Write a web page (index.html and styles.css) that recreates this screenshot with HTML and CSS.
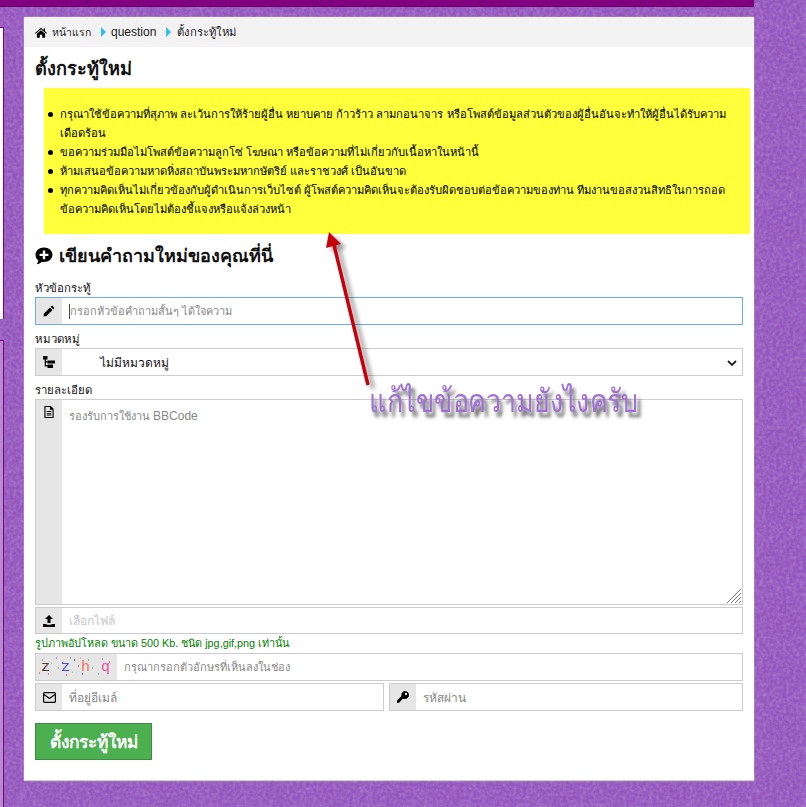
FILE: index.html
```html
<!DOCTYPE html>
<html lang="th">
<head>
<meta charset="utf-8">
<title>ตั้งกระทู้ใหม่</title>
<link rel="stylesheet" href="styles.css">
</head>
<body>
<svg class="bg-pattern" aria-hidden="true">
  <defs>
    <pattern id="damask" width="56" height="56" patternUnits="userSpaceOnUse">
      <g fill="none" stroke="#a873cc" stroke-width="2" opacity=".28">
        <path d="M28 4c7 7 11 14 0 24C17 18 21 11 28 4z"/>
        <path d="M28 28c7 7 11 14 0 24-11-10-7-17 0-24z"/>
        <path d="M4 28c7-7 14-11 24 0-10 11-17 7-24 0zM28 28c7-7 14-11 24 0-10 11-17 7-24 0z"/>
      </g>
      <g fill="none" stroke="#8a4db4" stroke-width="1.500" opacity=".28">
        <path d="M0 14c6 0 8 6 14 0s-4-12-14-14M56 42c-6 0-8-6-14 0s4 12 14 14"/>
        <circle cx="28" cy="28" r="4"/>
        <circle cx="0" cy="0" r="7"/><circle cx="56" cy="0" r="7"/><circle cx="0" cy="56" r="7"/><circle cx="56" cy="56" r="7"/>
      </g>
    </pattern>
    <filter id="grain" x="0" y="0" width="100%" height="100%">
      <feTurbulence type="fractalNoise" baseFrequency=".3" numOctaves="2" seed="4"/>
      <feColorMatrix type="matrix" values="0 0 0 0 .68  0 0 0 0 .46  0 0 0 0 .82  0 0 0 .6 -.2"/>
    </filter>
  </defs>
  <rect width="100%" height="100%" fill="url(#damask)"/>
  <rect width="100%" height="100%" filter="url(#grain)"/>
</svg>
<div class="topbar"><i class="m1"></i><i class="m2"></i><i class="m3"></i><i class="m4"></i><i class="m5"></i></div>
<div class="side side-a"></div>
<div class="side side-b"></div>
<main class="card">
  <nav class="crumbs">
    <svg class="ic-home" viewBox="0 0 14 12"><path d="M7 .5 0 6.600l.8.900L7 2.200l6.200 5.300.8-.9-2.300-2V1.200H10v2.100zM2.200 7.400V12h3.400V8.500h2.800V12h3.400V7.400L7 3.300z"/></svg>
    <span class="cr-home">หน้าแรก</span>
    <i class="tri"></i>
    <span class="latin">question</span>
    <i class="tri tri-last"></i>
    <span>ตั้งกระทู้ใหม่</span>
  </nav>
  <div class="body">
    <h1 class="title">ตั้งกระทู้ใหม่</h1>
    <div class="notice">
      <ul>
        <li>กรุณาใช้ข้อความที่สุภาพ ละเว้นการให้ร้ายผู้อื่น หยาบคาย ก้าวร้าว ลามกอนาจาร หรือโพสต์ข้อมูลส่วนตัวของผู้อื่นอันจะทำให้ผู้อื่นได้รับความ<br>เดือดร้อน</li>
        <li>ขอความร่วมมือไม่โพสต์ข้อความลูกโซ่ โฆษณา หรือข้อความที่ไม่เกี่ยวกับเนื้อหาในหน้านี้</li>
        <li>ห้ามเสนอข้อความหาดหิ่งสถาบันพระมหากษัตริย์ และราชวงศ์ เป็นอันขาด</li>
        <li>ทุกความคิดเห็นไม่เกี่ยวข้องกับผู้ดำเนินการเว็บไซต์ ผู้โพสต์ความคิดเห็นจะต้องรับผิดชอบต่อข้อความของท่าน ทีมงานขอสงวนสิทธิในการถอด<br>ข้อความคิดเห็นโดยไม่ต้องชี้แจงหรือแจ้งล่วงหน้า</li>
      </ul>
    </div>
    <h2 class="sub">
      <svg class="ic-plus" viewBox="0 0 18 18"><path fill-rule="evenodd" d="M9 .5c4.800 0 8.500 3.200 8.500 7.300S13.800 15 9 15c-.8 0-1.500-.1-2.200-.2C5.400 16.200 3.600 17 1.500 17.300c1-1 1.700-2.300 1.800-3.800C1.500 12.200.5 10.200.5 7.800.5 3.700 4.200.5 9 .5zM7.800 3.500v3.200H4.600v2.400h3.200v3.200h2.400V9.100h3.200V6.700h-3.200V3.500z"/></svg>
      เขียนคำถามใหม่ของคุณที่นี่
    </h2>
    <label class="lbl">หัวข้อกระทู้</label>
    <div class="group focus">
      <span class="addon"><svg class="ic" viewBox="0 0 12 12"><path d="M9 .5 11.500 3 10.200 4.300 7.700 1.800zM7 2.500 9.500 5 3.500 11 .5 11.500 1 8.500z"/></svg></span>
      <span class="field ph caret narrow">กรอกหัวข้อคำถามสั้นๆ ได้ใจความ</span>
    </div>
    <label class="lbl">หมวดหมู่</label>
    <div class="group">
      <span class="addon"><svg class="ic" viewBox="0 0 12 12"><path d="M0 0h4.500v3.500H3v1.700h1.500V4.500H12v3H4.500V6.500H3v2.700h1.500V8.500H10V12H4.500v-1.500H1.700v-7H0z"/></svg></span>
      <span class="field sel">ไม่มีหมวดหมู่</span>
      <svg class="chev" viewBox="0 0 10 6"><path d="M1 1l4 4 4-4" fill="none" stroke="#222" stroke-width="1.800"/></svg>
    </div>
    <label class="lbl">รายละเอียด</label>
    <div class="group area">
      <span class="addon addon-top"><svg class="ic" viewBox="0 0 12 13"><path fill-rule="evenodd" d="M1 0h7l3 3v10H1zM2.200 1.200v10.600h7.600V4H7V1.200zM3.500 5.500h5v1h-5zM3.500 7.500h5v1h-5zM3.500 9.300h5v1h-5z"/></svg></span>
      <span class="field ph top narrow">รองรับการใช้งาน <span class="latin">BBCode</span></span>
      <svg class="grip" viewBox="0 0 14 14"><path d="M14 0 0 14M14 4 4 14M14 8 8 14M14 12 12 14" stroke="#777" stroke-width="1" fill="none"/></svg>
    </div>
    <div class="group file">
      <span class="addon"><svg class="ic" viewBox="0 0 12 12"><path d="M6 0 10 4H7.500v4h-3V4H2zM0 9h3.500v.8h5V9H12v3H0z"/></svg></span>
      <span class="field ph-light">เลือกไฟล์</span>
    </div>
    <p class="hint">รูปภาพอัปโหลด ขนาด 500 Kb. ชนิด jpg,gif,png เท่านั้น</p>
    <div class="group">
      <span class="addon captcha">
        <svg class="specks" viewBox="0 0 80 26" aria-hidden="true">
          <g fill="#5a9"><circle cx="6" cy="6" r=".7"/><circle cx="34" cy="4" r=".7"/><circle cx="62" cy="20" r=".7"/><circle cx="15" cy="9" r=".6"/></g>
          <g fill="#c5c"><circle cx="12" cy="20" r=".7"/><circle cx="20" cy="4" r=".7"/><circle cx="42" cy="12" r=".7"/><circle cx="66" cy="5" r=".6"/></g>
          <g fill="#3c3"><circle cx="22" cy="14" r=".7"/><circle cx="52" cy="6" r=".7"/><circle cx="56" cy="14" r=".7"/><circle cx="36" cy="18" r=".6"/></g>
          <g fill="#e55"><circle cx="8" cy="14" r=".7"/><circle cx="30" cy="21" r=".7"/><circle cx="73" cy="8" r=".7"/><circle cx="44" cy="4" r=".6"/></g>
          <g fill="#33a"><circle cx="38" cy="6" r=".7"/><circle cx="46" cy="20" r=".7"/><circle cx="26" cy="9" r=".7"/><circle cx="3" cy="19" r=".6"/></g>
        </svg>
        <b class="c1">z</b><b class="c2">z</b><b class="c3">h</b><b class="c4">q</b>
      </span>
      <span class="field ph cap-text narrow">กรุณากรอกตัวอักษรที่เห็นลงในช่อง</span>
    </div>
    <div class="pair">
      <div class="group g-mail">
        <span class="addon"><svg class="ic ic-mail" viewBox="0 0 13 11"><path fill="none" stroke="#000" stroke-width="1.200" d="M1.500.6h10a.9.900 0 0 1 .9.900v8a.9.900 0 0 1-.9.900h-10a.9.900 0 0 1-.9-.9v-8a.9.900 0 0 1 .9-.9zM1 2.500 6.500 6.500 12 2.500"/></svg></span>
        <span class="field ph">ที่อยู่อีเมล์</span>
      </div>
      <div class="group g-pass">
        <span class="addon"><svg class="ic" viewBox="0 0 12 12"><path fill-rule="evenodd" d="M8 0a4 4 0 1 1-2 7.500L1.800 12H0V9.500l4.500-4.500A4 4 0 0 1 8 0zm1 1.800a1.200 1.200 0 1 0 0 2.400 1.200 1.200 0 0 0 0-2.400z"/></svg></span>
        <span class="field ph">รหัสผ่าน</span>
      </div>
    </div>
    <button class="submit" type="button">ตั้งกระทู้ใหม่</button>
  </div>
</main>
<svg class="arrow" viewBox="0 0 100 190" aria-hidden="true">
  <defs>
    <filter id="sh" x="-50%" y="-20%" width="200%" height="140%"><feGaussianBlur stdDeviation="2"/></filter>
  </defs>
  <g transform="translate(5 4)" filter="url(#sh)" opacity=".55">
    <path d="M45 154 11 14" stroke="#444" stroke-width="3.500" fill="none"/>
    <path d="M6 1 18 13 3 17z" fill="#444"/>
  </g>
  <path d="M45 154 11 14" stroke="#c8000a" stroke-width="3.500" fill="none"/>
  <path d="M6 1 18 13 3 17z" fill="#c8000a"/>
</svg>
<div class="callout">แก้ไขข้อความยังไงครับ</div>
</body>
</html>
```

FILE: styles.css
```css
* { box-sizing: border-box; }
html, body { margin: 0; padding: 0; }
body {
  width: 806px;
  height: 807px;
  overflow: hidden;
  position: relative;
  background-color: #9356bd;
  font-family: "Liberation Sans", "Noto Sans", "Noto Sans CJK SC", sans-serif;
  color: #000;
  padding: 17px 52px 0 24px;
}
.bg-pattern {
  position: absolute;
  left: 0;
  top: 0;
  width: 100%;
  height: 100%;
}
.topbar {
  position: absolute;
  left: 0;
  top: 0;
  width: 754px;
  height: 7px;
  background: #800080;
  border-bottom: 1px solid #6e006e;
  display: flex;
}
.topbar i { height: 6px; border-right: 1px solid #650065; flex: none; }
.m1 { width: 87px; }
.m2 { width: 105px; }
.m3 { width: 140px; }
.m4 { width: 149px; }
.m5 { width: 160px; }
.side {
  position: absolute;
  left: 0;
  width: 4px;
  border-top: 1px solid #800080;
  border-right: 1px solid #800080;
}
.side-a { top: 27px; height: 292px; background: #fff; }
.side-b { top: 340px; bottom: 0; background: #b48ad0; }
.card {
  position: relative;
  width: 730px;
  height: 764px;
  background: #fff;
  border-bottom: 1px solid #ccc;
  box-shadow: 0 0 1px #ddd;
}
.crumbs {
  height: 30px;
  background: #f3f3f3;
  display: flex;
  align-items: center;
  padding-left: 11px;
  font-size: 11.3px;
  color: #222;
}
.latin { font-size: 12px; }
.ic-home { width: 12px; height: 11px; margin-right: 5px; fill: #000; }
.cr-home { font-size: 10.5px; }
.tri {
  width: 0;
  height: 0;
  margin: 0 5px 0 10px;
  border-left: 5px solid #2cbcf6;
  border-top: 5px solid transparent;
  border-bottom: 5px solid transparent;
}
.tri-last { margin-right: 6px; }
.body { padding: 0 11px; }
.title {
  margin: 0;
  height: 41px;
  padding-top: 9px;
  font-size: 18.200px;
  line-height: 26px;
  font-weight: 700;
  color: #111;
}
.notice {
  margin: 0 -7px 0 9px;
  height: 146px;
  background: #ffff3c;
  padding: 17px 10px 0 16px;
  font-size: 11.2px;
  line-height: 19px;
}
.notice ul { margin: 0; padding: 0; list-style: none; }
.notice li { position: relative; }
.notice li::before {
  content: "";
  position: absolute;
  left: -12px;
  top: 7px;
  width: 5px;
  height: 5px;
  border-radius: 50%;
  background: #000;
}
.sub {
  margin: 0;
  height: 40px;
  display: flex;
  align-items: center;
  gap: 6px;
  font-size: 18px;
  font-weight: 700;
  color: #111;
  padding-top: 3px;
}
.ic-plus { width: 18px; height: 18px; fill: #000; }
.lbl {
  display: block;
  height: 23px;
  padding-top: 5px;
  font-size: 11.4px;
  line-height: 18px;
  color: #111;
}
.group {
  display: flex;
  align-items: center;
  position: relative;
  width: 708px;
  height: 28px;
  border: 1px solid #ccc;
  background: #fff;
  font-size: 12px;
}
.focus { border-color: #66afe9; }
.addon {
  width: 26px;
  align-self: stretch;
  background: #e6e6e6;
  display: flex;
  align-items: center;
  justify-content: center;
  flex: none;
}
.addon-top { align-items: flex-start; padding-top: 6px; }
.ic { width: 12px; height: 12px; fill: #000; }
.ic-mail { width: 13px; height: 11px; }
.field { padding-left: 7px; white-space: nowrap; }
.narrow { font-size: 11px; }
.ph { color: #888; }
.ph-light { color: #c8c8c8; }
.caret { border-left: 1px solid #444; margin-left: 7px; padding-left: 0; line-height: 15px; }
.sel { padding-left: 38px; color: #111; }
.top { align-self: flex-start; padding-top: 7px; }
.chev { position: absolute; right: 5px; top: 11px; width: 10px; height: 6px; }
.area { height: 206px; }
.grip { position: absolute; right: 1px; bottom: 1px; width: 14px; height: 14px; }
.file { margin-top: 2px; height: 27px; }
.hint {
  margin: 0;
  height: 19px;
  font-size: 10.800px;
  line-height: 19px;
  color: #008000;
}
.captcha {
  position: relative;
  width: 81px;
  gap: 11px;
  padding-left: 5px;
  font-family: "Liberation Mono", monospace;
  font-size: 15px;
  justify-content: flex-start;
}
.specks { position: absolute; left: 0; top: 0; width: 100%; height: 100%; }
.captcha b { font-weight: 400; position: relative; }
.c1 { color: #5a3a30; }
.c2 { color: #4a4ae0; }
.c3 { color: #f07060; }
.c4 { color: #f050a0; }
.pair {
  display: flex;
  gap: 5px;
  width: 708px;
  margin-top: 2px;
}
.pair .group { width: auto; }
.pair .g-mail { flex: 0 0 349px; }
.pair .g-pass { flex: 1; }
.submit {
  display: block;
  margin-top: 12px;
  width: 117px;
  height: 37px;
  background: #4caf50;
  border: 1px solid #3d8b40;
  color: #fff;
  font-family: inherit;
  font-size: 17.300px;
  font-weight: 700;
  padding: 0;
}
.arrow {
  position: absolute;
  left: 323px;
  top: 231px;
  width: 100px;
  height: 190px;
}
.callout {
  position: absolute;
  left: 369px;
  top: 379px;
  font-size: 32px;
  line-height: 44px;
  color: #a070d8;
  text-shadow: 4px 5px 4px #555;
  white-space: nowrap;
  transform: scaleX(.836);
  transform-origin: left center;
}
```
